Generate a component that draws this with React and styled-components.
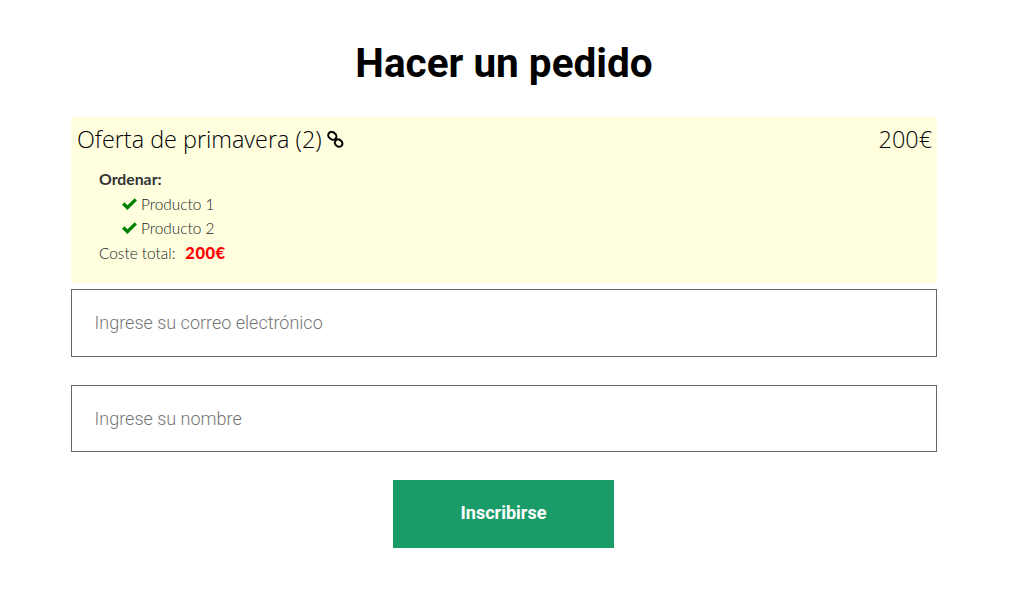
import React from "react";
import styled, { createGlobalStyle } from "styled-components";

const Global = createGlobalStyle`
  html, body { margin: 0; padding: 0; background: #fff; }
  * { box-sizing: border-box; }
`;
const Page = styled.div`
  width: 1009px; height: 598px; overflow: hidden; padding: 0 72px 0 71px;
  display: flex; flex-direction: column; align-items: stretch;
`;
const Title = styled.h1`
  margin: 39px 0 29px; height: 49px; text-align: center;
  font: 700 40.5px/49px Roboto, sans-serif; color: #000;
`;
const Offer = styled.section`
  background: #ffffe0; height: 166px; padding: 6px 5px 0 6px; margin-bottom: 6px;
`;
const OfferHead = styled.div`
  display: flex; justify-content: space-between; align-items: center;
  font: 300 23.4px/32px "Open Sans", sans-serif; color: #000;
`;
const OfferName = styled.div` display: flex; align-items: center; gap: 5px; `;
const Details = styled.div`
  margin-top: 12px; padding-left: 22px;
  font: 300 15.4px/24.5px Lato, sans-serif; color: #222;
`;
const Label = styled.div` font-weight: 700; font-size: 15.8px; color: #333; `;
const Item = styled.div`
  display: flex; align-items: center; gap: 4px; padding-left: 23px;
`;
const Total = styled.div` display: flex; gap: 10px; `;
const Price = styled.strong` color: #f00; font-weight: 900; font-size: 16.5px; letter-spacing: .5px; `;
const Field = styled.input`
  display: block; width: 100%; height: ${p => p.$h}px; margin-bottom: 28px;
  border: 1px solid #666; border-radius: 0; padding: 0 22.5px ${p => p.$pb}px; outline: none; background: #fff;
  font: 300 18px Roboto, sans-serif; color: #333;
  &::placeholder { color: #757575; opacity: 1; }
`;
const Submit = styled.button`
  display: block; align-self: center; width: 221px; height: 68px; border: 0; margin-left: -1px; padding: 0 0 4px;
  background: #1a9c69; color: #fff; font: 700 18px Roboto, sans-serif;
`;
const LinkIcon = () => (
  <svg width="17" height="17" viewBox="0 0 17 17" fill="none" stroke="#000" strokeWidth="2">
    <rect x="1" y="1.4" width="8.6" height="6.8" rx="3.4" transform="rotate(40 5.3 4.8)" />
    <rect x="7.6" y="8.8" width="8" height="6.6" rx="3.3" transform="rotate(40 11.6 12.1)" />
  </svg>
);
const CheckIcon = () => (
  <svg width="15" height="12" viewBox="0 0 15 12" fill="none" stroke="green" strokeWidth="3.4">
    <path d="M1.2 5.6 L5.4 9.6 L13.8 1.4" />
  </svg>
);
export default function App() {
  return (
    <Page>
      <Global />
      <Title>Hacer un pedido</Title>
      <Offer>
        <OfferHead>
          <OfferName>Oferta de primavera (2) <LinkIcon /></OfferName>
          <span>200€</span>
        </OfferHead>
        <Details>
          <Label>Ordenar:</Label>
          <Item><CheckIcon /> Producto 1</Item>
          <Item><CheckIcon /> Producto 2</Item>
          <Total>Coste total: <Price>200€</Price></Total>
        </Details>
      </Offer>
      <Field $h={68} $pb={1} placeholder="Ingrese su correo electrónico" />
      <Field $h={67} $pb={0} placeholder="Ingrese su nombre" />
      <Submit>Inscribirse</Submit>
    </Page>
  );
}
